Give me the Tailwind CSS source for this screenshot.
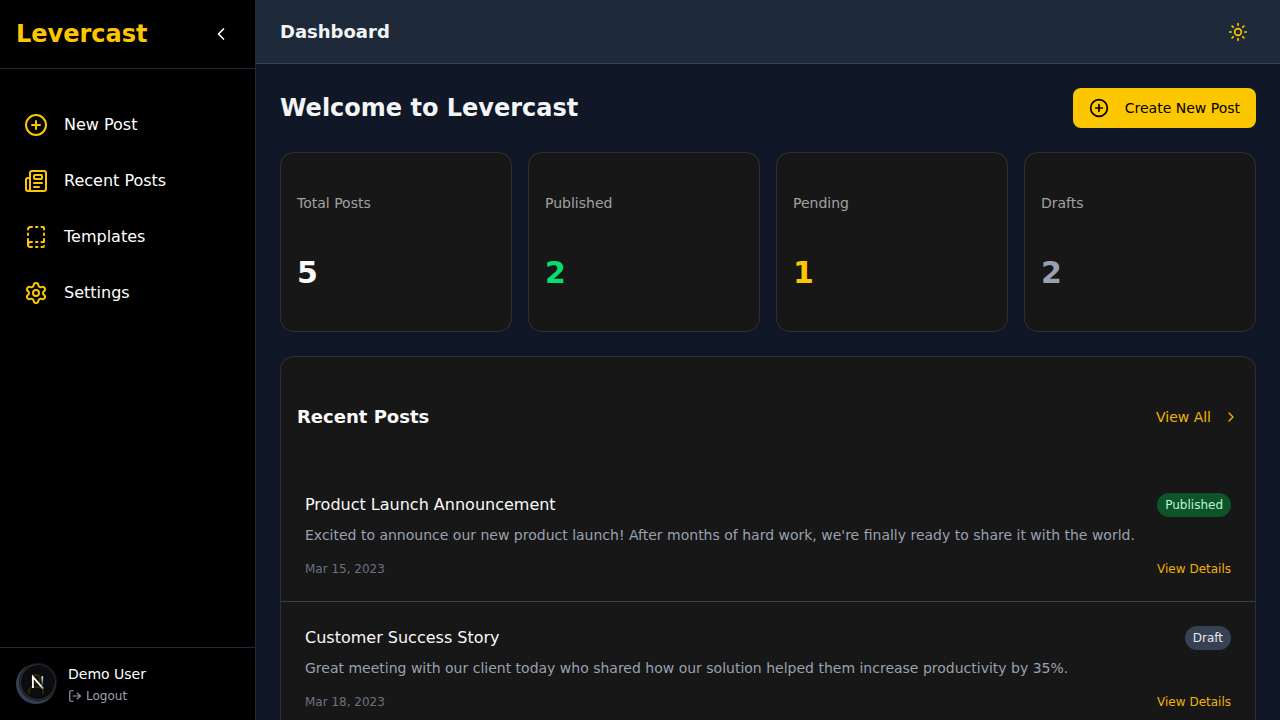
<!DOCTYPE html>
<html lang="en">
<head>
<meta charset="utf-8">
<title>Levercast</title>
<script src="https://cdn.jsdelivr.net/npm/@tailwindcss/browser@4"></script>
</head>
<body class="flex h-screen overflow-hidden bg-[#101828] font-['DejaVu_Sans',sans-serif] text-white">
<aside class="flex h-full w-64 shrink-0 flex-col border-r border-[#1e2939] bg-black">
  <div class="flex h-[69px] items-center justify-between border-b border-[#1e2939] pl-4 pr-6">
    <h1 class="text-2xl font-bold text-[#fdc700]">Levercast</h1>
    <svg class="size-5" viewBox="0 0 24 24" fill="none" stroke="currentColor" stroke-width="2" stroke-linecap="round" stroke-linejoin="round"><path d="m15 18-6-6 6-6"/></svg>
  </div>
  <nav class="flex flex-1 flex-col gap-2 px-3 pt-8">
    <a class="flex h-12 items-center gap-4 px-3">
      <svg class="size-6 text-[#fdc700]" viewBox="0 0 24 24" fill="none" stroke="currentColor" stroke-width="2" stroke-linecap="round" stroke-linejoin="round"><circle cx="12" cy="12" r="10"/><path d="M8 12h8M12 8v8"/></svg>
      <span>New Post</span>
    </a>
    <a class="flex h-12 items-center gap-4 px-3">
      <svg class="size-6 text-[#fdc700]" viewBox="0 0 24 24" fill="none" stroke="currentColor" stroke-width="2" stroke-linecap="round" stroke-linejoin="round"><path d="M15 18h-5"/><path d="M18 14h-8"/><path d="M4 22h16a2 2 0 0 0 2-2V4a2 2 0 0 0-2-2H8a2 2 0 0 0-2 2v16a2 2 0 0 1-4 0v-9a2 2 0 0 1 2-2h2"/><rect width="8" height="4" x="10" y="6" rx="1"/></svg>
      <span>Recent Posts</span>
    </a>
    <a class="flex h-12 items-center gap-4 px-3">
      <svg class="size-6 text-[#fdc700]" viewBox="0 0 24 24" fill="none" stroke="currentColor" stroke-width="2" stroke-linecap="round" stroke-linejoin="round"><path d="M12 17h1.5"/><path d="M12 22h1.5"/><path d="M12 2h1.5"/><path d="M17.5 22H19a1 1 0 0 0 1-1"/><path d="M17.5 2H19a1 1 0 0 1 1 1v1.5"/><path d="M20 14v3h-2.5"/><path d="M20 8.5V10"/><path d="M4 10V8.5"/><path d="M4 19.5V14"/><path d="M4 4.5A2.5 2.5 0 0 1 6.5 2H8"/><path d="M8 22H6.5a1 1 0 0 1 0-5H8"/></svg>
      <span>Templates</span>
    </a>
    <a class="flex h-12 items-center gap-4 px-3">
      <svg class="size-6 text-[#fdc700]" viewBox="0 0 24 24" fill="none" stroke="currentColor" stroke-width="2" stroke-linecap="round" stroke-linejoin="round"><path d="M9.671 4.136a2.34 2.34 0 0 1 4.659 0 2.34 2.34 0 0 0 3.319 1.915 2.34 2.34 0 0 1 2.33 4.033 2.34 2.34 0 0 0 0 3.831 2.34 2.34 0 0 1-2.33 4.033 2.34 2.34 0 0 0-3.319 1.915 2.34 2.34 0 0 1-4.659 0 2.34 2.34 0 0 0-3.32-1.915 2.34 2.34 0 0 1-2.33-4.033 2.34 2.34 0 0 0 0-3.831A2.34 2.34 0 0 1 6.35 6.051a2.34 2.34 0 0 0 3.319-1.915"/><circle cx="12" cy="12" r="3"/></svg>
      <span>Settings</span>
    </a>
  </nav>
  <div class="flex h-[73px] items-center gap-3 border-t border-[#1e2939] px-4">
    <div class="relative flex size-10 items-center justify-center rounded-full bg-[#364153]">
      <svg class="size-6 text-[#fdc700]" viewBox="0 0 24 24" fill="none" stroke="currentColor" stroke-width="2" stroke-linecap="round" stroke-linejoin="round"><path d="M19 21v-2a4 4 0 0 0-4-4H9a4 4 0 0 0-4 4v2"/><circle cx="12" cy="7" r="4"/></svg>
      <div class="absolute left-1 top-0 size-9 rounded-full bg-black/80 shadow-[0_0_0_1px_#171717,inset_0_0_0_1px_rgba(255,255,255,0.14),0_16px_32px_-8px_rgba(0,0,0,0.24)]">
        <svg class="size-9" viewBox="0 0 36 36" fill="none">
          <defs>
            <linearGradient id="diag" x1="20" y1="21" x2="26" y2="28" gradientUnits="userSpaceOnUse"><stop stop-color="white"/><stop offset="1" stop-color="white" stop-opacity="0"/></linearGradient>
            <linearGradient id="stem" x1="22" y1="12" x2="22" y2="23" gradientUnits="userSpaceOnUse"><stop stop-color="white"/><stop offset="1" stop-color="white" stop-opacity="0"/></linearGradient>
          </defs>
          <path d="M23.2 24.6 12.9 12.8V24" stroke="url(#diag)" stroke-width="1.8"/><path d="M22.3 12.2V24" stroke="url(#stem)" stroke-width="1.6"/>
        </svg>
      </div>
    </div>
    <div>
      <p class="text-sm">Demo User</p>
      <div class="mt-1 flex items-center gap-1 text-xs text-[#99a1af]">
        <svg class="size-3.5" viewBox="0 0 24 24" fill="none" stroke="currentColor" stroke-width="2" stroke-linecap="round" stroke-linejoin="round"><path d="M9 21H5a2 2 0 0 1-2-2V5a2 2 0 0 1 2-2h4"/><path d="m16 17 5-5-5-5"/><path d="M21 12H9"/></svg>
        Logout
      </div>
    </div>
  </div>
</aside>
<div class="flex min-w-0 flex-1 flex-col">
  <header class="flex h-16 shrink-0 items-center justify-between border-b border-[#364153] bg-[#1e2939] pl-6 pr-8">
    <h2 class="text-lg font-semibold text-[#f3f4f6]">Dashboard</h2>
    <svg class="size-5 text-[#fdc700]" viewBox="0 0 24 24" fill="none" stroke="currentColor" stroke-width="2" stroke-linecap="round" stroke-linejoin="round"><circle cx="12" cy="12" r="4"/><path d="M12 2v2"/><path d="M12 20v2"/><path d="m4.93 4.93 1.41 1.41"/><path d="m17.66 17.66 1.41 1.41"/><path d="M2 12h2"/><path d="M20 12h2"/><path d="m6.34 17.66-1.41 1.41"/><path d="m19.07 4.93-1.41 1.41"/></svg>
  </header>
  <main class="flex min-h-0 flex-1 flex-col gap-6 overflow-hidden p-6">
    <div class="flex h-10 shrink-0 items-center justify-between">
      <h1 class="text-2xl font-bold text-[#f3f4f6]">Welcome to Levercast</h1>
      <button class="flex h-10 items-center gap-4 rounded-lg bg-[#fdc700] px-4 text-sm font-medium text-black">
        <svg class="size-5" viewBox="0 0 24 24" fill="none" stroke="currentColor" stroke-width="2" stroke-linecap="round" stroke-linejoin="round"><circle cx="12" cy="12" r="10"/><path d="M8 12h8M12 8v8"/></svg>
        Create New Post
      </button>
    </div>
    <div class="grid shrink-0 grid-cols-4 gap-4">
      <div class="flex h-[180px] flex-col gap-[42px] rounded-[14px] border border-white/10 bg-[#171717] px-4 pt-10"><p class="text-sm text-[#a1a1a1]">Total Posts</p><p class="text-3xl font-bold text-[#fafafa]">5</p></div>
      <div class="flex h-[180px] flex-col gap-[42px] rounded-[14px] border border-white/10 bg-[#171717] px-4 pt-10"><p class="text-sm text-[#a1a1a1]">Published</p><p class="text-3xl font-bold text-[#05df72]">2</p></div>
      <div class="flex h-[180px] flex-col gap-[42px] rounded-[14px] border border-white/10 bg-[#171717] px-4 pt-10"><p class="text-sm text-[#a1a1a1]">Pending</p><p class="text-3xl font-bold text-[#fdc700]">1</p></div>
      <div class="flex h-[180px] flex-col gap-[42px] rounded-[14px] border border-white/10 bg-[#171717] px-4 pt-10"><p class="text-sm text-[#a1a1a1]">Drafts</p><p class="text-3xl font-bold text-[#99a1af]">2</p></div>
    </div>
    <section class="shrink-0 rounded-[14px] border border-white/10 bg-[#171717]">
      <div class="flex h-28 items-center justify-between px-4 pt-2">
        <h3 class="text-lg font-semibold text-[#fafafa]">Recent Posts</h3>
        <a class="flex items-center gap-3 text-sm text-[#f0b100]">View All
          <svg class="size-4" viewBox="0 0 24 24" fill="none" stroke="currentColor" stroke-width="2" stroke-linecap="round" stroke-linejoin="round"><path d="m9 18 6-6-6-6"/></svg>
        </a>
      </div>
      <article class="border-b border-[#364153] p-6">
        <div class="flex items-center justify-between"><h4 class="font-medium text-[#fafafa]">Product Launch Announcement</h4><span class="rounded-full bg-[#0d542b] px-2 py-1 text-xs text-[#b9f8cf]">Published</span></div>
        <p class="mt-2 text-sm text-[#99a1af]">Excited to announce our new product launch! After months of hard work, we're finally ready to share it with the world.</p>
        <div class="mt-4 flex justify-between text-xs"><span class="text-[#6a7282]">Mar 15, 2023</span><a class="text-[#f0b100]">View Details</a></div>
      </article>
      <article class="border-b border-[#364153] p-6">
        <div class="flex items-center justify-between"><h4 class="font-medium text-[#fafafa]">Customer Success Story</h4><span class="rounded-full bg-[#364153] px-2 py-1 text-xs text-[#e5e7eb]">Draft</span></div>
        <p class="mt-2 text-sm text-[#99a1af]">Great meeting with our client today who shared how our solution helped them increase productivity by 35%.</p>
        <div class="mt-4 flex justify-between text-xs"><span class="text-[#6a7282]">Mar 18, 2023</span><a class="text-[#f0b100]">View Details</a></div>
      </article>
    </section>
  </main>
</div>
</body>
</html>
